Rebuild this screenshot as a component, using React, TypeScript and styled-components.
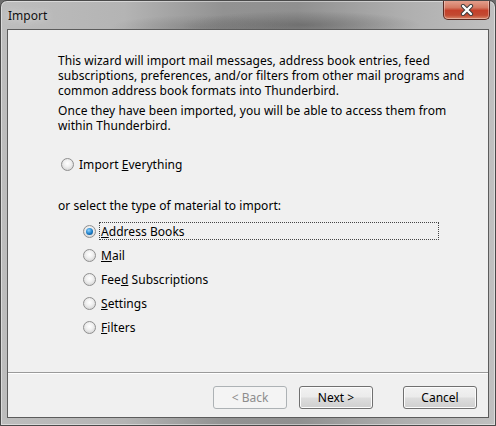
import React from "react";
import styled, { createGlobalStyle } from "styled-components";

const Global = createGlobalStyle`
  html, body { margin: 0; padding: 0; background: #6d6d6d; }
  body { font-family: "Noto Sans", "Open Sans", sans-serif; }
`;

const Window = styled.div`
  width: 496px;
  height: 426px;
  box-sizing: border-box;
  border: 1px solid #4a4a4a;
  border-radius: 7px 7px 0 0;
  background:
    radial-gradient(ellipse 120px 14px at 300px 24px, rgba(80,80,80,0.5), transparent),
    radial-gradient(ellipse 90px 12px at 200px 26px, rgba(100,100,100,0.35), transparent),
    linear-gradient(90deg, #bdbdbd 0%, #b4b4b4 25%, #929292 45%, #909090 60%, #adadad 80%, #c0c0c0 100%);
  display: flex;
  flex-direction: column;
  overflow: hidden;
  box-shadow: inset 0 0 0 1px rgba(255,255,255,0.45);
`;

const TitleBar = styled.div`
  height: 28px;
  flex: none;
  display: flex;
  align-items: flex-start;
  justify-content: space-between;
  padding-left: 7px;
`;

const Title = styled.div`
  font-family: "Noto Sans", sans-serif;
  font-size: 12px;
  color: #111;
  margin-top: 6px;
  text-shadow: 0 0 8px rgba(255,255,255,0.8);
`;

const CloseButton = styled.div`
  width: 47px;
  height: 20px;
  margin-top: -1px;
  margin-right: 5px;
  box-sizing: border-box;
  border: 1px solid #5a2a22;
  border-top: none;
  border-radius: 0 0 5px 5px;
  background: linear-gradient(180deg, #e6a593 0%, #d57a63 40%, #c4402a 55%, #c24a32 80%, #d9886a 100%);
  box-shadow: inset 0 0 0 1px rgba(255,255,255,0.35);
  display: flex;
  align-items: center;
  justify-content: center;
`;

const Client = styled.div`
  flex: 1;
  margin: 0 6px 7px 6px;
  border: 1px solid #5c5c5c;
  background: #f0f0f0;
  display: flex;
  flex-direction: column;
  font-family: "Noto Sans", sans-serif;
  font-size: 12px;
  color: #000;
`;

const Content = styled.div`
  flex: 1;
  padding: 23px 0 0 50px;
`;

const Para = styled.p`
  margin: 0 0 5px 0;
  line-height: 15px;
  white-space: nowrap;
  letter-spacing: 0.05px;
`;

const Option = styled.label<{ $indent?: number; $top?: number }>`
  display: flex;
  align-items: center;
  height: 18px;
  margin-left: ${(p) => p.$indent ?? 0}px;
  margin-top: ${(p) => p.$top ?? 0}px;
  letter-spacing: 0.05px;
`;

const OptionList = styled.div`
  display: flex;
  flex-direction: column;
  gap: 6px;
  margin-top: 9px;
`;

const Radio = styled.span<{ $checked?: boolean }>`
  width: 13px;
  height: 13px;
  box-sizing: border-box;
  border-radius: 50%;
  border: 1px solid #8f8f8f;
  background: radial-gradient(circle at 50% 40%, #ffffff 0%, #f0f0f0 40%, #c9c9c9 100%);
  display: flex;
  align-items: center;
  justify-content: center;
  margin-left: 3px;
  margin-right: 6px;
  flex: none;
  &::after {
    content: "";
    display: ${(p) => (p.$checked ? "block" : "none")};
    width: 7px;
    height: 7px;
    border-radius: 50%;
    background: radial-gradient(circle at 40% 35%, #8fd3ff 0%, #1a7cc6 55%, #0b3f74 100%);
  }
`;

const OptionText = styled.span<{ $focus?: boolean }>`
  display: flex;
  align-items: center;
  height: 18px;
  box-sizing: border-box;
  padding: 0 2px 0 1px;
  margin-left: -3px;
  border: 1px ${(p) => (p.$focus ? "dotted #444" : "solid transparent")};
  flex: ${(p) => (p.$focus ? 1 : "none")};
  max-width: ${(p) => (p.$focus ? "340px" : "none")};
`;

const Key = styled.span`
  text-decoration: underline;
`;

const Section = styled.div`
  margin-top: 25px;
  line-height: 15px;
  letter-spacing: 0.05px;
`;

const Footer = styled.div`
  flex: none;
  border-top: 1px solid #9a9a9a;
  box-shadow: inset 0 1px 0 #fff;
  height: 45px;
  box-sizing: border-box;
  display: flex;
  justify-content: flex-end;
  align-items: flex-start;
  padding: 13px 11px 0 0;
`;

const Button = styled.button<{ $gapLeft?: number; $disabled?: boolean }>`
  width: 74px;
  height: 23px;
  margin-left: ${(p) => p.$gapLeft ?? 0}px;
  font-family: "Noto Sans", sans-serif;
  font-size: 12px;
  color: ${(p) => (p.$disabled ? "#8d8d8d" : "#000")};
  border: 1px solid ${(p) => (p.$disabled ? "#adb2b5" : "#707070")};
  border-radius: 3px;
  background: ${(p) =>
    p.$disabled
      ? "#f4f4f4"
      : "linear-gradient(180deg, #f2f2f2 0%, #ebebeb 48%, #dddddd 52%, #cfcfcf 100%)"};
  box-shadow: inset 0 0 0 1px ${(p) => (p.$disabled ? "#f4f4f4" : "#fcfcfc")};
  padding: 0;
`;

export default function App() {
  return (
    <>
      <Global />
      <Window>
        <TitleBar>
          <Title>Import</Title>
          <CloseButton>
            <svg width="16" height="12" viewBox="0 0 16 12">
              <path
                d="M4 2 L12 10 M12 2 L4 10"
                stroke="#3b3b3b"
                strokeWidth="4.2"
                strokeLinecap="round"
                fill="none"
              />
              <path
                d="M4 2 L12 10 M12 2 L4 10"
                stroke="#fff"
                strokeWidth="2.4"
                strokeLinecap="round"
                fill="none"
              />
            </svg>
          </CloseButton>
        </TitleBar>
        <Client>
          <Content>
            <Para>
              This wizard will import mail messages, address book entries, feed
              <br />
              subscriptions, preferences, and/or filters from other mail programs and
              <br />
              common address book formats into Thunderbird.
            </Para>
            <Para>
              Once they have been imported, you will be able to access them from
              <br />
              within Thunderbird.
            </Para>
            <Option $top={22}>
              <Radio />
              <OptionText>
                Import&nbsp;<Key>E</Key>verything
              </OptionText>
            </Option>
            <Section>or select the type of material to import:</Section>
            <OptionList>
              <Option $indent={22}>
                <Radio $checked />
                <OptionText $focus>
                  <Key>A</Key>ddress Books
                </OptionText>
              </Option>
              <Option $indent={22}>
                <Radio />
                <OptionText>
                  <Key>M</Key>ail
                </OptionText>
              </Option>
              <Option $indent={22}>
                <Radio />
                <OptionText>
                  Fee<Key>d</Key>&nbsp;Subscriptions
                </OptionText>
              </Option>
              <Option $indent={22}>
                <Radio />
                <OptionText>
                  <Key>S</Key>ettings
                </OptionText>
              </Option>
              <Option $indent={22}>
                <Radio />
                <OptionText>
                  <Key>F</Key>ilters
                </OptionText>
              </Option>
            </OptionList>
          </Content>
          <Footer>
            <Button $disabled>&lt; Back</Button>
            <Button $gapLeft={12}>Next &gt;</Button>
            <Button $gapLeft={30}>Cancel</Button>
          </Footer>
        </Client>
      </Window>
    </>
  );
}
